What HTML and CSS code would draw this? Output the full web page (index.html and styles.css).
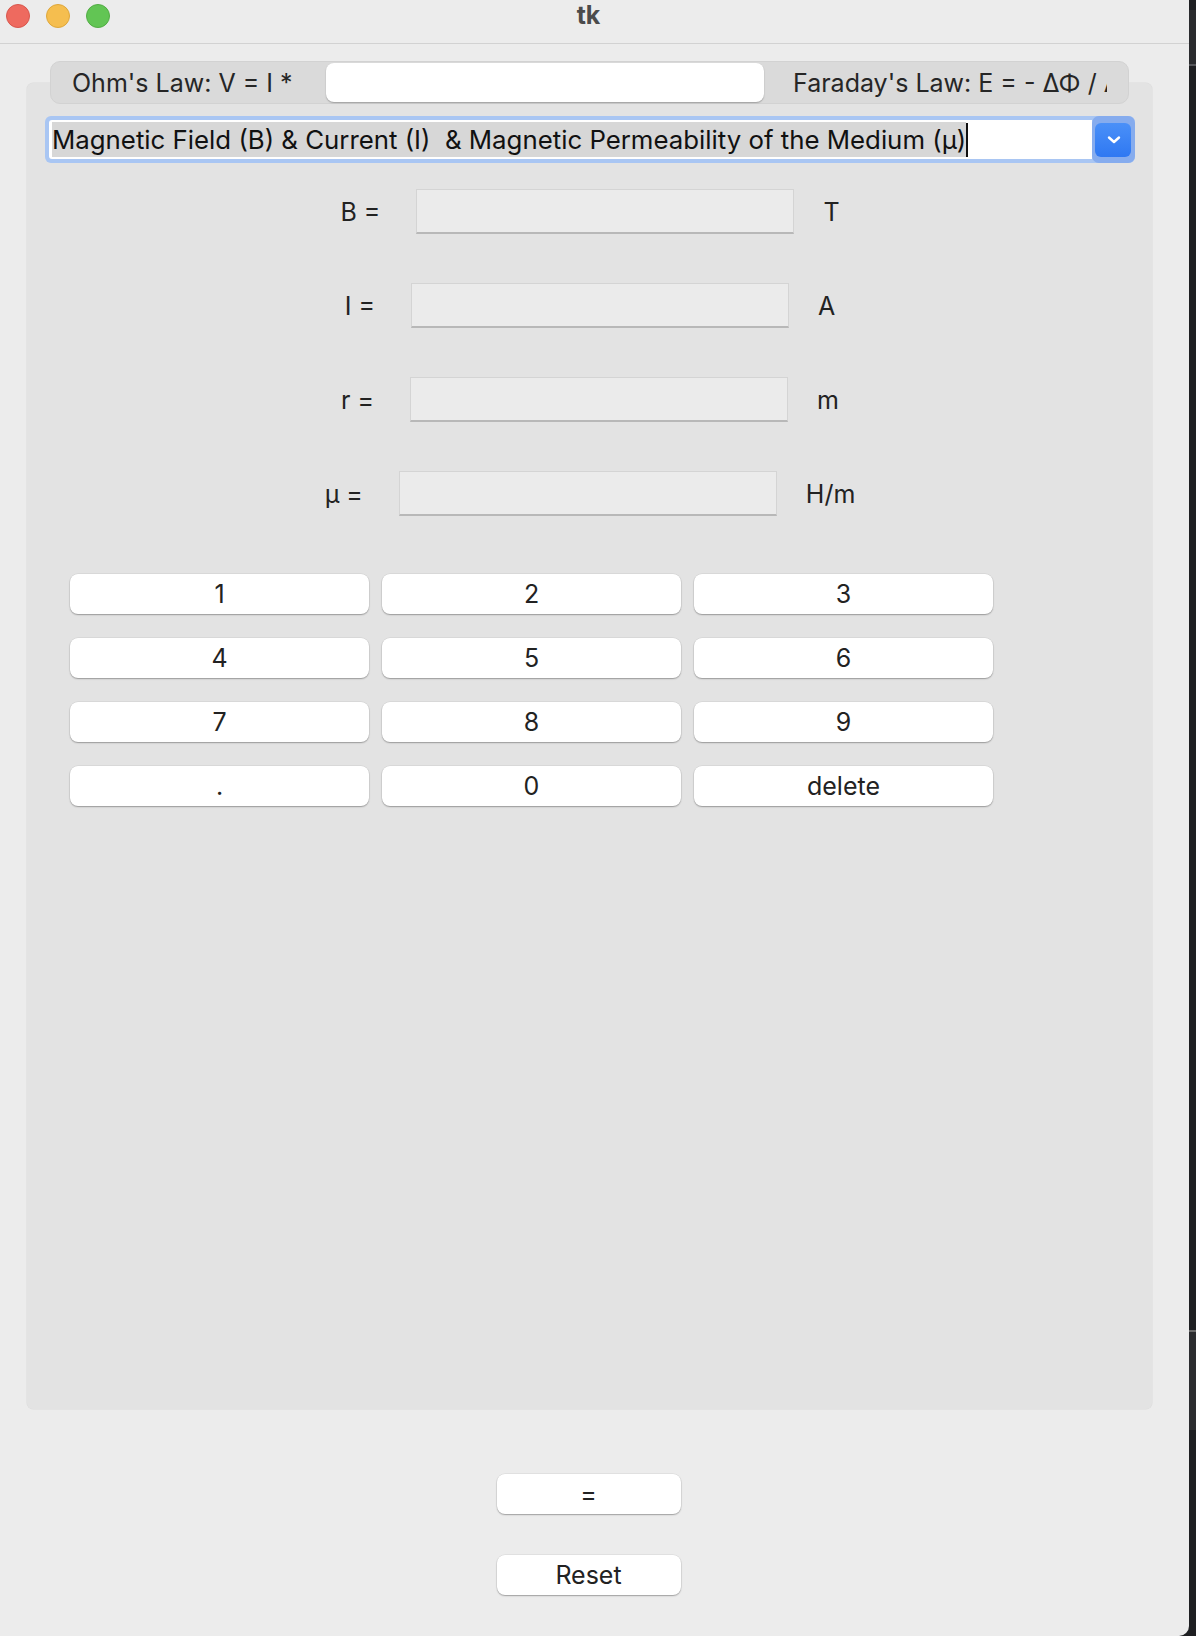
FILE: index.html
```html
<!DOCTYPE html>
<html lang="en">
<head>
<meta charset="utf-8">
<title>tk</title>
<link rel="stylesheet" href="styles.css">
</head>
<body>
<div class="desktop">
  <div class="window">
    <div class="titlebar">
      <div class="lights">
        <span class="light red"></span>
        <span class="light yellow"></span>
        <span class="light green"></span>
      </div>
      <div class="title">tk</div>
      <div></div>
    </div>

    <div class="notebook">
      <div class="tabs">
        <div class="tab tab-first"><span>Ohm's Law: V = I *</span></div>
        <div class="tab tab-selected"></div>
        <div class="tab tab-last"><span>Faraday's Law: E = - ΔΦ / Δt</span></div>
      </div>
      <div class="pane">
        <div class="combo">
          <div class="combo-field">
            <span class="combo-text">Magnetic Field (B) &amp; Current (I)&nbsp; &amp; Magnetic Permeability of the Medium (μ)</span><span class="caret"></span>
          </div>
          <div class="combo-btn">
            <svg width="16" height="10" viewBox="0 0 16 10"><path d="M3 2.5 L8 7 L13 2.5" fill="none" stroke="#fff" stroke-width="2.4" stroke-linecap="round" stroke-linejoin="round"/></svg>
          </div>
        </div>

        <div class="fields">
          <div class="field-row"><span class="lbl">B =</span><span class="entry"></span><span class="unit">T</span></div>
          <div class="field-row"><span class="lbl">I =</span><span class="entry"></span><span class="unit">A</span></div>
          <div class="field-row"><span class="lbl">r =</span><span class="entry"></span><span class="unit">m</span></div>
          <div class="field-row"><span class="lbl">μ =</span><span class="entry"></span><span class="unit">H/m</span></div>
        </div>

        <div class="keypad">
          <button class="key">1</button>
          <button class="key">2</button>
          <button class="key">3</button>
          <button class="key">4</button>
          <button class="key">5</button>
          <button class="key">6</button>
          <button class="key">7</button>
          <button class="key">8</button>
          <button class="key">9</button>
          <button class="key">.</button>
          <button class="key">0</button>
          <button class="key">delete</button>
        </div>
      </div>
    </div>

    <div class="actions">
      <button class="key action">=</button>
      <button class="key action">Reset</button>
    </div>
  </div>
  <div class="side">
    <div class="side-top"></div>
    <div class="side-mid"></div>
  </div>
</div>
</body>
</html>
```

FILE: styles.css
```css
* { box-sizing: border-box; }
html, body { margin: 0; padding: 0; }
body {
  background: #1e1f22;
  font-family: Inter, "Noto Sans", "Liberation Sans", sans-serif;
  color: #222;
  width: 1196px;
  height: 1636px;
  overflow: hidden;
}
.desktop {
  display: flex;
  height: 1636px;
}
.window {
  width: 1189px;
  height: 1636px;
  background: #ececec;
  border-bottom-right-radius: 10px;
  flex: none;
}
.side {
  flex: 1;
  display: flex;
  flex-direction: column;
}
.side-top { height: 56px; background: #2a2b2e; border-bottom: 2px solid #55565a; margin-top: 10px; }
.side-mid { height: 100px; margin-top: 1264px; background: #2b2c2f; border-top: 2px solid #6a6a6a; }

.titlebar {
  height: 44px;
  border-bottom: 1px solid #d2d2d2;
  background: #ececec;
  display: grid;
  grid-template-columns: 1fr auto 1fr;
  align-items: center;
  padding-right: 12px;
}
.lights { display: flex; gap: 16px; padding-left: 6px; margin-top: -12px; }
.light { width: 24px; height: 24px; border-radius: 50%; display: block; }
.red { background: #ee6a5f; border: 1px solid #d8574d; }
.yellow { background: #f5be4f; border: 1px solid #dea73b; }
.green { background: #62c554; border: 1px solid #52ac44; }
.title {
  font-weight: 700;
  font-size: 25px;
  color: #4b4b4b;
  margin-top: -14px;
}

.notebook {
  margin: 17px 37px 0 27px;
  display: flex;
  flex-direction: column;
}
.tabs {
  margin: 0 23px;
  height: 43px;
  background: #dadada;
  border: 1px solid #d2d2d2;
  border-radius: 10px;
  display: flex;
  align-items: center;
  position: relative;
  z-index: 1;
  padding: 0 2px;
}
.tab {
  height: 39px;
  font-size: 25px;
  color: #262626;
  display: flex;
  align-items: center;
  overflow: hidden;
  white-space: nowrap;
}
.tab-first { width: 273px; padding-left: 19px; }
.tab-selected {
  width: 438px;
  background: #fff;
  border-radius: 8px;
  box-shadow: 0 1px 1.5px rgba(0,0,0,0.28);
}
.tab-last { width: 345px; padding-left: 29px; }
.tab-last span { display: block; width: 314px; overflow: hidden; }

.pane {
  margin-top: -21px;
  height: 1326px;
  background: #e3e3e3;
  border-radius: 6px;
  box-shadow: 0 0 0 0.5px #dcdcdc;
  padding: 33px 17px 0 18px;
}

.combo {
  height: 47px;
  display: flex;
  background: #a9c6f3;
  border-radius: 6px;
  padding: 4px 0 4px 4px;
}
.combo-field {
  flex: 1;
  background: #fff;
  display: flex;
  align-items: center;
  border-radius: 3px 0 0 3px;
  padding-left: 3px;
}
.combo-text {
  background: #d7d7d7;
  font-size: 25.8px;
  line-height: 35px;
  color: #111;
  white-space: nowrap;
}
.caret { width: 2px; height: 34px; background: #111; display: block; }
.combo-btn {
  width: 43px;
  margin: -4px 0;
  background: #86acee;
  border-radius: 7px;
  padding: 4px;
  display: flex;
  position: relative;
}
.combo-btn::before {
  content: "";
  position: absolute;
  inset: 7px 4px 6px 3px;
  background: linear-gradient(#4a90f8, #2f78f2);
  border-radius: 6px;
}
.combo-btn svg { display: block; margin: auto; position: relative; }

.fields {
  margin-top: 26px;
  display: flex;
  flex-direction: column;
  gap: 49px;
}
.field-row {
  display: flex;
  justify-content: center;
  align-items: center;
  padding-right: 0;
}
.lbl { font-size: 25px; color: #222; margin-right: 36px; }
.unit { font-size: 25px; color: #222; margin-left: 29px; }
.entry {
  width: 378px;
  height: 45px;
  background: #ebebeb;
  border: 1px solid #d4d4d4;
  border-bottom: 2px solid #b8b8b8;
}

.keypad {
  margin-top: 58px;
  margin-left: 25px;
  display: grid;
  grid-template-columns: repeat(3, 299px);
  column-gap: 13px;
  row-gap: 24px;
}
.key {
  height: 40px;
  background: #fff;
  border: none;
  border-radius: 8px;
  box-shadow: 0 1px 1.5px rgba(0,0,0,0.3), 0 0 0 0.5px rgba(0,0,0,0.08);
  font-family: Inter, "Noto Sans", "Liberation Sans", sans-serif;
  font-size: 25px;
  color: #222;
  padding: 0;
  cursor: pointer;
}

.actions {
  display: flex;
  flex-direction: column;
  align-items: center;
  gap: 41px;
  margin-top: 65px;
  padding-right: 12px;
}
.action { width: 184px; }
```
